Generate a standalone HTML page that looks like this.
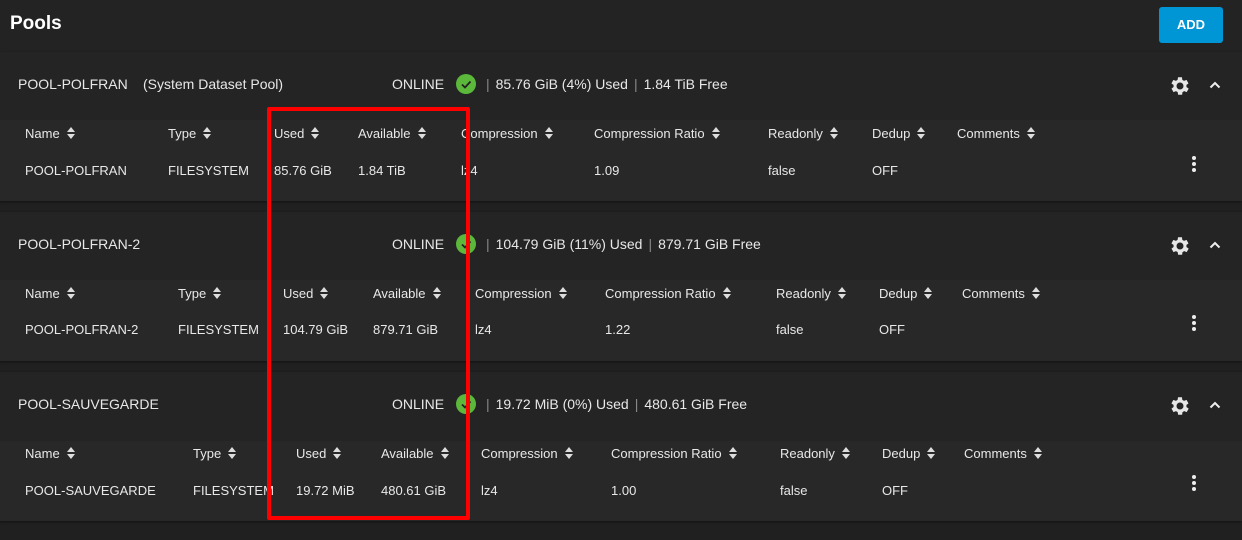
<!DOCTYPE html>
<html><head><meta charset="utf-8"><style>
*{margin:0;padding:0;box-sizing:border-box}
body{width:1242px;height:540px;background:#202020;font-family:"Liberation Sans",sans-serif;color:#e8e8e8;position:relative;overflow:hidden}
.top{position:absolute;left:0;top:0;width:1242px;height:52px;background:#232323}
h1{position:absolute;left:10px;top:13px;font-size:19px;font-weight:bold;color:#fff}
.add{position:absolute;left:1159px;top:7px;width:64px;height:36px;background:#0095d5;border-radius:3px;color:#fff;font-weight:bold;font-size:13px;text-align:center;line-height:36px}
.card{position:absolute;left:0;width:1242px;height:149px;background:#242424;box-shadow:0 1px 2px #111}
.tbl{position:absolute;left:0;top:68px;width:1242px;height:81px;background:#282828}
.t{position:absolute;font-size:13px;white-space:nowrap}
.h{font-size:14px}
.s{display:inline-block;width:8px;height:12px;vertical-align:-1px;margin-left:7px}
.chk{position:absolute;width:20px;height:20px;border-radius:50%;background:#5cb83a}
.sep{color:#888;margin:0 6px}
.dots{position:absolute;left:1192px;width:4px}
.dots i{display:block;width:4px;height:4px;border-radius:50%;background:#eee;margin-bottom:2px}
.red{position:absolute;left:267px;top:107px;width:203px;height:413px;border:4px solid #f00;border-radius:2px}
.gear{position:absolute;left:1168px;top:22px}
</style></head><body>
<div class="top"></div>
<h1>Pools</h1>
<div class="add">ADD</div>

<div class="card" style="top:52px">
 <div class="t h" style="left:18px;top:24px">POOL-POLFRAN</div>
 <div class="t h" style="left:143px;top:24px">(System Dataset Pool)</div>
 <div class="t h" style="left:392px;top:24px">ONLINE</div>
 <div class="chk" style="left:456px;top:22px"><svg width="20" height="20"><path d="M6 10.5l3 3 5.5-6" stroke="#222" stroke-width="1.8" fill="none"/></svg></div>
 <div class="t h" style="left:482px;top:24px"><span class="sep" style="margin-left:4px">|</span>85.76 GiB (4%) Used<span class="sep">|</span>1.84 TiB Free</div>
 <svg class="gear" width="24" height="24" viewBox="0 0 24 24"><path fill="#e6e6e6" d="M19.4 13a7.5 7.5 0 000-2l2.1-1.6-2-3.5-2.5 1a7.6 7.6 0 00-1.7-1L15 3.3h-4l-.4 2.6a7.6 7.6 0 00-1.7 1l-2.5-1-2 3.5L6.6 11a7.5 7.5 0 000 2l-2.1 1.6 2 3.5 2.5-1c.5.4 1.1.7 1.7 1l.4 2.6h4l.4-2.6c.6-.3 1.2-.6 1.7-1l2.5 1 2-3.5zM13 15.5a3.5 3.5 0 110-7 3.5 3.5 0 010 7z" transform="translate(-1 0)"/></svg>
 <svg style="position:absolute;left:1209px;top:28px" width="12" height="10"><path d="M1.5 7.5L6 3l4.5 4.5" stroke="#eee" stroke-width="2" fill="none"/></svg>
 <div class="tbl">
  <div class="t" style="left:25px;top:6px">Name<svg class="s" viewBox="0 0 8 12"><path d="M0 5h8L4 0zM0 7h8L4 12z" fill="#ddd"/></svg></div>
  <div class="t" style="left:168px;top:6px">Type<svg class="s" viewBox="0 0 8 12"><path d="M0 5h8L4 0zM0 7h8L4 12z" fill="#ddd"/></svg></div>
  <div class="t" style="left:274px;top:6px">Used<svg class="s" viewBox="0 0 8 12"><path d="M0 5h8L4 0zM0 7h8L4 12z" fill="#ddd"/></svg></div>
  <div class="t" style="left:358px;top:6px">Available<svg class="s" viewBox="0 0 8 12"><path d="M0 5h8L4 0zM0 7h8L4 12z" fill="#ddd"/></svg></div>
  <div class="t" style="left:461px;top:6px">Compression<svg class="s" viewBox="0 0 8 12"><path d="M0 5h8L4 0zM0 7h8L4 12z" fill="#ddd"/></svg></div>
  <div class="t" style="left:594px;top:6px">Compression Ratio<svg class="s" viewBox="0 0 8 12"><path d="M0 5h8L4 0zM0 7h8L4 12z" fill="#ddd"/></svg></div>
  <div class="t" style="left:768px;top:6px">Readonly<svg class="s" viewBox="0 0 8 12"><path d="M0 5h8L4 0zM0 7h8L4 12z" fill="#ddd"/></svg></div>
  <div class="t" style="left:872px;top:6px">Dedup<svg class="s" viewBox="0 0 8 12"><path d="M0 5h8L4 0zM0 7h8L4 12z" fill="#ddd"/></svg></div>
  <div class="t" style="left:957px;top:6px">Comments<svg class="s" viewBox="0 0 8 12"><path d="M0 5h8L4 0zM0 7h8L4 12z" fill="#ddd"/></svg></div>
  <div class="t" style="left:25px;top:43px">POOL-POLFRAN</div>
  <div class="t" style="left:168px;top:43px">FILESYSTEM</div>
  <div class="t" style="left:274px;top:43px">85.76 GiB</div>
  <div class="t" style="left:358px;top:43px">1.84 TiB</div>
  <div class="t" style="left:461px;top:43px">lz4</div>
  <div class="t" style="left:594px;top:43px">1.09</div>
  <div class="t" style="left:768px;top:43px">false</div>
  <div class="t" style="left:872px;top:43px">OFF</div>
  <div class="dots" style="top:36px"><i></i><i></i><i></i></div>
 </div>
</div>

<div class="card" style="top:212px">
 <div class="t h" style="left:18px;top:24px">POOL-POLFRAN-2</div>
 <div class="t h" style="left:392px;top:24px">ONLINE</div>
 <div class="chk" style="left:456px;top:22px"><svg width="20" height="20"><path d="M6 10.5l3 3 5.5-6" stroke="#222" stroke-width="1.8" fill="none"/></svg></div>
 <div class="t h" style="left:482px;top:24px"><span class="sep" style="margin-left:4px">|</span>104.79 GiB (11%) Used<span class="sep">|</span>879.71 GiB Free</div>
 <svg class="gear" width="24" height="24" viewBox="0 0 24 24"><path fill="#e6e6e6" d="M19.4 13a7.5 7.5 0 000-2l2.1-1.6-2-3.5-2.5 1a7.6 7.6 0 00-1.7-1L15 3.3h-4l-.4 2.6a7.6 7.6 0 00-1.7 1l-2.5-1-2 3.5L6.6 11a7.5 7.5 0 000 2l-2.1 1.6 2 3.5 2.5-1c.5.4 1.1.7 1.7 1l.4 2.6h4l.4-2.6c.6-.3 1.2-.6 1.7-1l2.5 1 2-3.5zM13 15.5a3.5 3.5 0 110-7 3.5 3.5 0 010 7z" transform="translate(-1 0)"/></svg>
 <svg style="position:absolute;left:1209px;top:28px" width="12" height="10"><path d="M1.5 7.5L6 3l4.5 4.5" stroke="#eee" stroke-width="2" fill="none"/></svg>
 <div class="tbl">
  <div class="t" style="left:25px;top:6px">Name<svg class="s" viewBox="0 0 8 12"><path d="M0 5h8L4 0zM0 7h8L4 12z" fill="#ddd"/></svg></div>
  <div class="t" style="left:178px;top:6px">Type<svg class="s" viewBox="0 0 8 12"><path d="M0 5h8L4 0zM0 7h8L4 12z" fill="#ddd"/></svg></div>
  <div class="t" style="left:283px;top:6px">Used<svg class="s" viewBox="0 0 8 12"><path d="M0 5h8L4 0zM0 7h8L4 12z" fill="#ddd"/></svg></div>
  <div class="t" style="left:373px;top:6px">Available<svg class="s" viewBox="0 0 8 12"><path d="M0 5h8L4 0zM0 7h8L4 12z" fill="#ddd"/></svg></div>
  <div class="t" style="left:475px;top:6px">Compression<svg class="s" viewBox="0 0 8 12"><path d="M0 5h8L4 0zM0 7h8L4 12z" fill="#ddd"/></svg></div>
  <div class="t" style="left:605px;top:6px">Compression Ratio<svg class="s" viewBox="0 0 8 12"><path d="M0 5h8L4 0zM0 7h8L4 12z" fill="#ddd"/></svg></div>
  <div class="t" style="left:776px;top:6px">Readonly<svg class="s" viewBox="0 0 8 12"><path d="M0 5h8L4 0zM0 7h8L4 12z" fill="#ddd"/></svg></div>
  <div class="t" style="left:879px;top:6px">Dedup<svg class="s" viewBox="0 0 8 12"><path d="M0 5h8L4 0zM0 7h8L4 12z" fill="#ddd"/></svg></div>
  <div class="t" style="left:962px;top:6px">Comments<svg class="s" viewBox="0 0 8 12"><path d="M0 5h8L4 0zM0 7h8L4 12z" fill="#ddd"/></svg></div>
  <div class="t" style="left:25px;top:42px">POOL-POLFRAN-2</div>
  <div class="t" style="left:178px;top:42px">FILESYSTEM</div>
  <div class="t" style="left:283px;top:42px">104.79 GiB</div>
  <div class="t" style="left:373px;top:42px">879.71 GiB</div>
  <div class="t" style="left:475px;top:42px">lz4</div>
  <div class="t" style="left:605px;top:42px">1.22</div>
  <div class="t" style="left:776px;top:42px">false</div>
  <div class="t" style="left:879px;top:42px">OFF</div>
  <div class="dots" style="top:35px"><i></i><i></i><i></i></div>
 </div>
</div>

<div class="card" style="top:372px">
 <div class="t h" style="left:18px;top:24px">POOL-SAUVEGARDE</div>
 <div class="t h" style="left:392px;top:24px">ONLINE</div>
 <div class="chk" style="left:456px;top:22px"><svg width="20" height="20"><path d="M6 10.5l3 3 5.5-6" stroke="#222" stroke-width="1.8" fill="none"/></svg></div>
 <div class="t h" style="left:482px;top:24px"><span class="sep" style="margin-left:4px">|</span>19.72 MiB (0%) Used<span class="sep">|</span>480.61 GiB Free</div>
 <svg class="gear" width="24" height="24" viewBox="0 0 24 24"><path fill="#e6e6e6" d="M19.4 13a7.5 7.5 0 000-2l2.1-1.6-2-3.5-2.5 1a7.6 7.6 0 00-1.7-1L15 3.3h-4l-.4 2.6a7.6 7.6 0 00-1.7 1l-2.5-1-2 3.5L6.6 11a7.5 7.5 0 000 2l-2.1 1.6 2 3.5 2.5-1c.5.4 1.1.7 1.7 1l.4 2.6h4l.4-2.6c.6-.3 1.2-.6 1.7-1l2.5 1 2-3.5zM13 15.5a3.5 3.5 0 110-7 3.5 3.5 0 010 7z" transform="translate(-1 0)"/></svg>
 <svg style="position:absolute;left:1209px;top:28px" width="12" height="10"><path d="M1.5 7.5L6 3l4.5 4.5" stroke="#eee" stroke-width="2" fill="none"/></svg>
 <div class="tbl" style="top:69px;height:80px">
  <div class="t" style="left:25px;top:5px">Name<svg class="s" viewBox="0 0 8 12"><path d="M0 5h8L4 0zM0 7h8L4 12z" fill="#ddd"/></svg></div>
  <div class="t" style="left:193px;top:5px">Type<svg class="s" viewBox="0 0 8 12"><path d="M0 5h8L4 0zM0 7h8L4 12z" fill="#ddd"/></svg></div>
  <div class="t" style="left:296px;top:5px">Used<svg class="s" viewBox="0 0 8 12"><path d="M0 5h8L4 0zM0 7h8L4 12z" fill="#ddd"/></svg></div>
  <div class="t" style="left:381px;top:5px">Available<svg class="s" viewBox="0 0 8 12"><path d="M0 5h8L4 0zM0 7h8L4 12z" fill="#ddd"/></svg></div>
  <div class="t" style="left:481px;top:5px">Compression<svg class="s" viewBox="0 0 8 12"><path d="M0 5h8L4 0zM0 7h8L4 12z" fill="#ddd"/></svg></div>
  <div class="t" style="left:611px;top:5px">Compression Ratio<svg class="s" viewBox="0 0 8 12"><path d="M0 5h8L4 0zM0 7h8L4 12z" fill="#ddd"/></svg></div>
  <div class="t" style="left:780px;top:5px">Readonly<svg class="s" viewBox="0 0 8 12"><path d="M0 5h8L4 0zM0 7h8L4 12z" fill="#ddd"/></svg></div>
  <div class="t" style="left:882px;top:5px">Dedup<svg class="s" viewBox="0 0 8 12"><path d="M0 5h8L4 0zM0 7h8L4 12z" fill="#ddd"/></svg></div>
  <div class="t" style="left:964px;top:5px">Comments<svg class="s" viewBox="0 0 8 12"><path d="M0 5h8L4 0zM0 7h8L4 12z" fill="#ddd"/></svg></div>
  <div class="t" style="left:25px;top:42px">POOL-SAUVEGARDE</div>
  <div class="t" style="left:193px;top:42px">FILESYSTEM</div>
  <div class="t" style="left:296px;top:42px">19.72 MiB</div>
  <div class="t" style="left:381px;top:42px">480.61 GiB</div>
  <div class="t" style="left:481px;top:42px">lz4</div>
  <div class="t" style="left:611px;top:42px">1.00</div>
  <div class="t" style="left:780px;top:42px">false</div>
  <div class="t" style="left:882px;top:42px">OFF</div>
  <div class="dots" style="top:34px"><i></i><i></i><i></i></div>
 </div>
</div>

<div class="red"></div>
</body></html>
